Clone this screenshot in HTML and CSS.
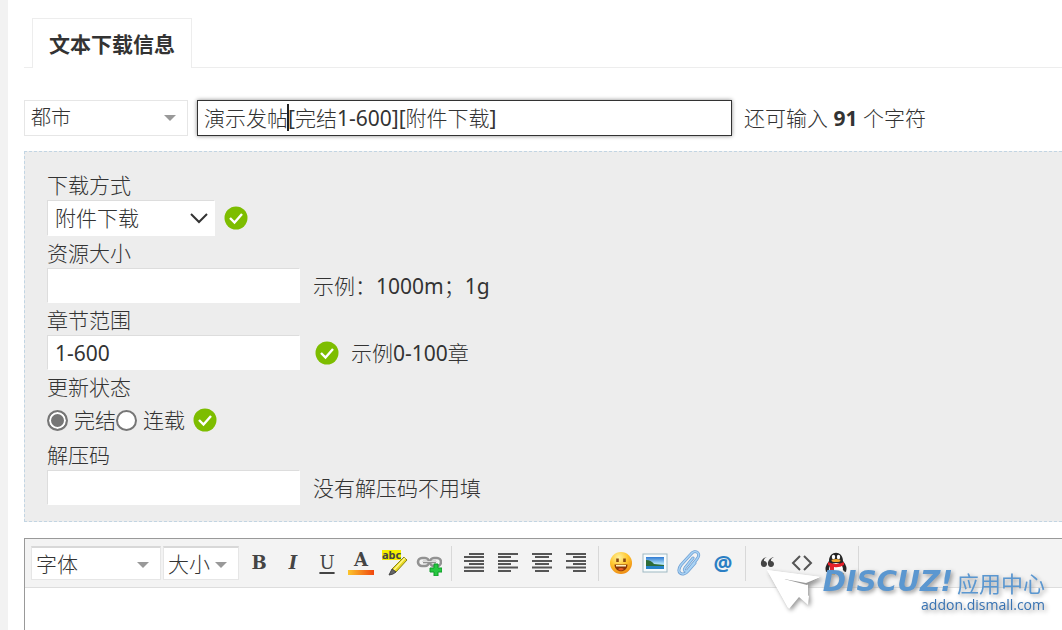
FILE: index.html
```html
<!DOCTYPE html>
<html lang="zh-CN">
<head>
    <meta charset="UTF-8">
    <meta name="viewport" content="width=device-width, initial-scale=1.0">
    <title>文本下载信息</title>
    <link rel="stylesheet" href="styles.css">
</head>
<body>
    <!-- shared icons -->
    <svg class="defs" width="0" height="0">
        <symbol id="check" viewBox="0 0 24 24">
            <circle cx="12" cy="12" r="11.500" fill="#7dbd00"/>
            <path d="M6 12l4.500 4.500L18 8" fill="none" stroke="#fff" stroke-width="2.400"/>
        </symbol>
    </svg>

    <form class="page">
        <div class="tabs">
            <h1 class="tab">文本下载信息</h1>
        </div>

        <div class="title-row">
            <div class="select-box select-type">
                <select class="select" aria-label="分类">
                    <option>都市</option>
                </select>
            </div>
            <div class="subject">
                <input class="subject-input" type="text" aria-label="标题" value="演示发帖[完结1-600][附件下载]">
                <span class="caret"></span>
            </div>
            <span class="counter">还可输入 <strong>91</strong> 个字符</span>
        </div>

        <div class="panel">
            <label class="label" for="method">下载方式</label>
            <div class="row row-tall">
                <div class="method-box">
                    <select class="select method" id="method">
                        <option>附件下载</option>
                    </select>
                    <svg class="chevron" viewBox="0 0 18 12"><path d="M1 2l8 8 8-8" fill="none" stroke="#333" stroke-width="2"/></svg>
                </div>
                <svg class="check"><use href="#check"/></svg>
            </div>
            <label class="label" for="size">资源大小</label>
            <div class="row">
                <input class="text" type="text" id="size">
                <span class="hint">示例：1000m；1g</span>
            </div>
            <label class="label" for="range">章节范围</label>
            <div class="row">
                <input class="text" type="text" id="range" value="1-600">
                <span class="hint hint-checked"><svg class="check"><use href="#check"/></svg>示例0-100章</span>
            </div>
            <div class="label">更新状态</div>
            <div class="row row-tall">
                <label class="radio"><input type="radio" name="state" checked>完结</label>
                <label class="radio"><input type="radio" name="state">连载</label>
                <svg class="check"><use href="#check"/></svg>
            </div>
            <label class="label" for="code">解压码</label>
            <div class="row">
                <input class="text" type="text" id="code">
                <span class="hint">没有解压码不用填</span>
            </div>
        </div>

        <div class="editor">
            <div class="toolbar">
                <div class="select-box select-font">
                    <select class="select" aria-label="字体"><option>字体</option></select>
                </div>
                <div class="select-box select-size">
                    <select class="select" aria-label="大小"><option>大小</option></select>
                </div>
                <div class="tools">
                    <button type="button" class="tool tool-b" aria-label="粗体">B</button>
                    <button type="button" class="tool tool-i" aria-label="斜体">I</button>
                    <button type="button" class="tool tool-u" aria-label="下划线">U</button>
                    <button type="button" class="tool tool-a" aria-label="文字颜色">A</button>
                    <button type="button" class="tool tool-abc" aria-label="背景色">
                        <span>abc</span>
                        <svg viewBox="0 0 26 26">
                            <path d="M22 7l3 3-11 12-4-3z" fill="#e8d820" stroke="#8a8418"/>
                            <path d="M23 8l-11 12" stroke="#fff78a" stroke-width="1.500"/>
                            <path d="M10 19l4 3-3 2-4 1z" fill="#666" stroke="#444"/>
                        </svg>
                    </button>
                    <button type="button" class="tool" aria-label="链接">
                        <svg viewBox="0 0 26 26">
                            <g fill="none" stroke="#929292" stroke-width="2.600">
                                <rect x="2" y="8" width="11" height="8" rx="4"/>
                                <rect x="14" y="8" width="11" height="8" rx="4"/>
                                <path d="M7 12h13"/>
                            </g>
                            <path d="M6 11.500h15" stroke="#ddd"/>
                            <path d="M18 14h4v4h4v4h-4v4h-4v-4h-4v-4h4z" fill="#27c840" stroke="#119a2a"/>
                        </svg>
                    </button>
                    <span class="sep"></span>
                    <button type="button" class="tool" aria-label="自动排版">
                        <svg viewBox="0 0 26 26"><path d="M8 4h15M3 7h20M3 11h20M8 14h15M3 17.500h20M3 21h20" class="bars"/></svg>
                    </button>
                    <button type="button" class="tool" aria-label="居左">
                        <svg viewBox="0 0 26 26"><path d="M3 4h20M3 7h13M3 11h20M3 14h13M3 17.500h20M3 21h13" class="bars"/></svg>
                    </button>
                    <button type="button" class="tool" aria-label="居中">
                        <svg viewBox="0 0 26 26"><path d="M3 4h20M6 7h14M3 11h20M6 14h14M3 17.500h20M6 21h14" class="bars"/></svg>
                    </button>
                    <button type="button" class="tool" aria-label="居右">
                        <svg viewBox="0 0 26 26"><path d="M3 4h20M10 7h13M3 11h20M10 14h13M3 17.500h20M10 21h13" class="bars"/></svg>
                    </button>
                    <span class="sep"></span>
                    <button type="button" class="tool" aria-label="表情">
                        <svg viewBox="0 0 26 26">
                            <defs><radialGradient id="face" cx=".4" cy=".25" r=".8"><stop offset="0" stop-color="#fff3a0"/><stop offset=".5" stop-color="#ffc62e"/><stop offset="1" stop-color="#ec8510"/></radialGradient></defs>
                            <circle cx="13" cy="13" r="11" fill="url(#face)"/>
                            <path d="M9.500 8.500v3.500M16.500 8.500v3.500" stroke="#8b4a13" stroke-width="2.600"/>
                            <path d="M6.500 14.500h13c0 9-13 9-13 0z" fill="#8a3608"/>
                            <path d="M8 15h10v1.500h-10z" fill="#fff1bd"/>
                            <path d="M10 19q3-2 6 0q-3 3-6 0z" fill="#e75b22"/>
                        </svg>
                    </button>
                    <button type="button" class="tool" aria-label="图片">
                        <svg viewBox="0 0 26 26">
                            <defs><linearGradient id="sky" x2="0" y2="1"><stop offset="0" stop-color="#2d79d2"/><stop offset=".6" stop-color="#b9e9fb"/><stop offset="1" stop-color="#2e91d4"/></linearGradient></defs>
                            <rect x="1" y="4" width="24" height="18" fill="#f7fbfc" stroke="#9fb9c3"/>
                            <rect x="4" y="7" width="18" height="12" fill="url(#sky)"/>
                            <path d="M4 10q5 0 8 4l10 1v1H4z" fill="#2e6d38"/>
                            <path d="M4 16h18v3H4z" fill="#2684c9"/>
                        </svg>
                    </button>
                    <button type="button" class="tool" aria-label="附件">
                        <svg viewBox="0 0 26 26" fill="none" stroke-linecap="round">
                            <path d="M17 8l-8 10c-2 3 1 4 3 2l9-11c5-6-2-10-6-5L5 15c-6 8 2 12 7 6l7-8" stroke="#6f9fd2" stroke-width="3"/>
                            <path d="M17 8l-8 10c-2 3 1 4 3 2l9-11c5-6-2-10-6-5L5 15c-6 8 2 12 7 6l7-8" stroke="#a9d3f5" stroke-width="1.500"/>
                        </svg>
                    </button>
                    <button type="button" class="tool tool-at" aria-label="提醒">@</button>
                    <span class="sep"></span>
                    <button type="button" class="tool" aria-label="引用">
                        <svg viewBox="0 0 26 26" fill="#444"><path d="M12 7c-3 1-3 3-3 4 4 0 4 6 0 6-5 0-4-9 3-10zM19 7c-3 1-3 3-3 4 4 0 4 6 0 6-5 0-4-9 3-10z"/></svg>
                    </button>
                    <button type="button" class="tool" aria-label="代码">
                        <svg viewBox="0 0 26 26"><path d="M11 6l-7 7 7 7M15 6l7 7-7 7" fill="none" stroke="#555" stroke-width="2"/></svg>
                    </button>
                    <button type="button" class="tool" aria-label="QQ">
                        <svg viewBox="0 0 26 26">
                            <path d="M6 11C6 0 20 0 20 11q5 6 3 11-2 0-3-2H6q-1 2-3 2-2-5 3-11z" fill="#252525"/>
                            <ellipse cx="13" cy="19" rx="7" ry="6" fill="#fff"/>
                            <ellipse cx="10.500" cy="7" rx="1.700" ry="2.300" fill="#fff"/>
                            <ellipse cx="15.500" cy="7" rx="1.700" ry="2.300" fill="#fff"/>
                            <ellipse cx="13" cy="10.500" rx="4.500" ry="1.500" fill="#f2a52c"/>
                            <path d="M5 12q8 4 16 0v3q-5 3-10 2v4H7v-5l-2-1z" fill="#e5202a"/>
                            <path d="M5 23h7v2H5zM14 23h7v2h-7z" fill="#eda12f"/>
                        </svg>
                    </button>
                    <span class="sep"></span>
                </div>
            </div>
        </div>

        <div class="watermark">
            <svg class="plane" viewBox="0 0 58 48">
                <path d="M2 4l54 7-13 7v20l-9-8-11 12z" fill="#fff"/>
                <path d="M19 13l37-2-14 8z" fill="#999"/>
                <path d="M2 4l54 7-15 6-22-4 25 17-1 9-9-8-10 12z" fill="#fff"/>
            </svg>
            <div class="brand">
                <div class="brand-top"><span class="discuz">DISCUZ!</span><span class="center">应用中心</span></div>
                <div class="domain">addon.dismall.com</div>
            </div>
        </div>
    </form>
</body>
</html>
```
FILE: styles.css
```css
* {
    margin: 0;
    padding: 0;
    box-sizing: border-box;
}
body {
    background-color: #fff;
    color: #333;
    font-family: "Noto Sans", "Noto Sans CJK SC Light", "Noto Sans CJK SC", sans-serif;
    font-size: 21px;
    line-height: 30px;
}
input, select, button {
    font: inherit;
    color: inherit;
}
.defs {
    position: absolute;
}
.page {
    position: relative;
    display: flex;
    flex-direction: column;
    min-height: 100vh;
    border-left: 8px solid #f2f2f2;
    padding: 18px 0 0 16px;
    overflow: hidden;
}

/* tabs */
.tabs {
    display: flex;
    padding-left: 8px;
    border-bottom: 1px solid #ededed;
}
.tab {
    height: 50px;
    margin-bottom: -1px;
    padding: 0 16px;
    border: 1px solid #ededed;
    border-bottom: none;
    background-color: #fff;
    font-family: "Noto Sans CJK SC", sans-serif;
    font-size: 21px;
    font-weight: bold;
    line-height: 48px;
}

/* subject */
.title-row {
    display: flex;
    align-items: center;
    margin: 32px 0 15px;
}
.select-box {
    position: relative;
    border: 1px solid #e6e6e6;
    background-color: #fff;
}
.select-box::after {
    content: "";
    position: absolute;
    top: 14px;
    right: 11px;
    border: 6px solid transparent;
    border-top-color: #999;
    border-bottom: none;
    pointer-events: none;
}
.select {
    display: block;
    width: 100%;
    height: 34px;
    border: none;
    background-color: transparent;
    appearance: none;
}
.select-type {
    width: 164px;
    margin-right: 9px;
}
.select-type .select {
    padding-left: 6px;
    font-size: 20px;
}
.subject {
    position: relative;
    width: 535px;
    margin-right: 12px;
}
.subject-input {
    display: block;
    width: 100%;
    height: 36px;
    padding: 0 6px 2px;
    border: 1px solid #333;
    box-shadow: 0 0 4px #888;
    outline: none;
}
.caret {
    position: absolute;
    top: 4px;
    left: 90px;
    width: 2px;
    height: 27px;
    background-color: #222;
}
.counter strong {
    font-weight: bold;
}

/* download info */
.panel {
    padding: 16px 22px;
    border: 1px dashed #c2d5e3;
    border-right: none;
    background-color: #ededed;
}
.label {
    display: block;
    padding-top: 2px;
}
.row {
    display: flex;
    align-items: center;
    height: 35px;
}
.row-tall {
    height: 36px;
}
.method-box {
    position: relative;
    width: 168px;
    margin-right: 9px;
    border: 1px solid #ddd;
    border-color: #ddd #fff #fff #ddd;
    background-color: #fff;
}
.method {
    padding-left: 7px;
}
.chevron {
    position: absolute;
    top: 11px;
    right: 6px;
    width: 18px;
    height: 12px;
    pointer-events: none;
}
.check {
    flex: none;
    width: 24px;
    height: 24px;
}
.text {
    width: 253px;
    height: 35px;
    padding: 0 7px;
    border: 1px solid #ddd;
    border-color: #ddd #fff #fff #ddd;
    background-color: #fff;
}
.hint {
    margin-left: 13px;
}
.hint-checked {
    display: flex;
    align-items: center;
    gap: 12px;
    margin-left: 15px;
}
.radio {
    display: flex;
    align-items: center;
}
.radio input {
    appearance: none;
    width: 21px;
    height: 21px;
    margin-right: 6px;
    border: 2px solid #767676;
    border-radius: 50%;
    background-color: #fff;
}
.radio input:checked {
    background-color: #767676;
    box-shadow: inset 0 0 0 2px #fff;
}
.radio + .check {
    margin-left: 8px;
}

/* editor */
.editor {
    flex: 1;
    margin-top: 16px;
    border: 1px solid #999;
    border-right: none;
    border-bottom: none;
}
.toolbar {
    display: flex;
    align-items: center;
    height: 49px;
    padding-left: 6px;
    border-bottom: 1px solid #ddd;
    background-color: #f3f3f3;
}
.toolbar .select-box {
    border-top: 2px solid #d8d8d8;
}
.toolbar .select {
    height: 31px;
    padding-left: 4px;
}
.select-font {
    width: 130px;
    margin-right: 2px;
}
.select-size {
    width: 76px;
    margin-right: 3px;
}
.tools {
    display: flex;
    align-items: center;
}
.tool {
    position: relative;
    display: flex;
    align-items: center;
    justify-content: center;
    width: 34px;
    height: 34px;
    border: none;
    background: none;
    color: #444;
    cursor: pointer;
}
.tool svg {
    width: 26px;
    height: 26px;
}
.tool-b, .tool-i, .tool-u, .tool-a {
    font-family: "DejaVu Serif", serif;
    font-size: 18px;
    font-weight: bold;
    line-height: 18px;
}
.tool-i {
    font-style: italic;
}
.tool-u {
    font-weight: normal;
    text-decoration: underline;
    text-decoration-thickness: 2px;
    text-underline-offset: 3px;
}
.tool-a {
    padding-bottom: 7px;
}
.tool-a::after {
    content: "";
    position: absolute;
    left: 4px;
    bottom: 5px;
    width: 26px;
    height: 5px;
    background: linear-gradient(to right, #fcc62c, #f0460e);
}
.tool-abc span {
    position: absolute;
    top: 4px;
    left: 4px;
    background-color: #f5ee00;
    font-size: 11px;
    font-weight: bold;
    line-height: 10px;
}
.tool-at {
    color: #2b7fc4;
    font-weight: bold;
}
.bars {
    fill: none;
    stroke: #555;
    stroke-width: 2;
}
.sep {
    width: 1px;
    height: 35px;
    margin: 0 5px;
    background-color: #d8d8d8;
}

/* watermark in the corner */
.watermark {
    position: absolute;
    right: 17px;
    bottom: 16px;
    display: flex;
    filter: drop-shadow(2px 2px 2px #999);
    pointer-events: none;
}
.plane {
    width: 58px;
    height: 48px;
}
.brand {
    text-align: right;
}
.brand-top {
    display: flex;
    align-items: center;
    height: 31px;
    color: #5b97d0;
    font-size: 22px;
}
.discuz {
    margin-right: 4px;
    font-family: "DejaVu Sans", sans-serif;
    font-size: 28px;
    font-style: italic;
    font-weight: bold;
}
.center {
    font-family: "Noto Sans CJK SC", sans-serif;
}
.domain {
    color: #3873b3;
    font-family: "Open Sans", sans-serif;
    font-size: 14px;
    line-height: 16px;
}
```
